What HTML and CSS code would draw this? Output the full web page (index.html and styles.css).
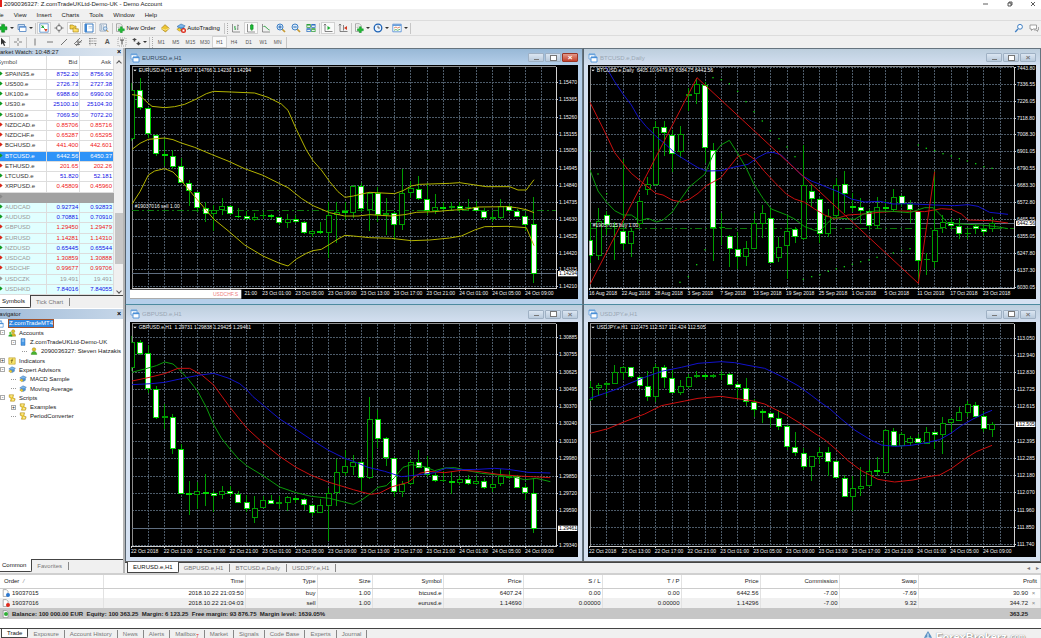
FILE: index.html
```html
<!DOCTYPE html>
<html lang="en">
<head>
<meta charset="utf-8">
<title>2090036327: Z.comTradeUKLtd-Demo-UK - Demo Account</title>
<link rel="stylesheet" href="styles.css">
</head>
<body>
<svg class="defs" aria-hidden="true">
  <symbol id="i-plus" viewBox="0 0 10 10"><path d="M1 1h5v3H1z" fill="#fff" stroke="#999" stroke-width=".6"/><path d="M3.6 1.6h3v2.2h2.4v3H6.600v2.400h-3V6.800H1.200v-3h2.400z" fill="#12b32a" stroke="#067a18" stroke-width=".5"/></symbol>
  <symbol id="i-profiles" viewBox="0 0 10 10"><path d="M1 1.500h6.500v5H1z" fill="#cfe2f8" stroke="#5b86b8" stroke-width=".8"/><path d="M2.500 3.500H9v5H2.500z" fill="#fff" stroke="#4a7fc0" stroke-width=".8"/><path d="M2.500 4.200H9" stroke="#5a93d6"/></symbol>
  <symbol id="i-market" viewBox="0 0 10 10"><path d="M.8.8h8.400v8.400H.800z" fill="#fff" stroke="#4c88c8" stroke-width=".8"/><path d="M2 5l2-3 1 2.500z" fill="#14a52c"/><path d="M2.500 2.500l3 3" stroke="#14a52c"/><path d="M5 6h3.500L7 8.800z" fill="#d93a20"/></symbol>
  <symbol id="i-target" viewBox="0 0 10 10"><circle cx="5" cy="5" r="2.600" fill="#fff" stroke="#777" stroke-width=".9"/><path d="M5 .5v3M5 6.500v3M.5 5h3M6.500 5h3" stroke="#666" stroke-width=".9"/></symbol>
  <symbol id="i-folder" viewBox="0 0 10 10"><path d="M1 2h3l1 1h2v3H1z" fill="#f6d24a" stroke="#a07d10" stroke-width=".6"/><path d="M4 5h2l.8.8H9.300V9H4z" fill="#ffe067" stroke="#a07d10" stroke-width=".6"/></symbol>
  <symbol id="i-terminal" viewBox="0 0 10 10"><path d="M1 1h8v8H1z" fill="#fff" stroke="#3a7ac0"/><path d="M1 1h2v8H1z" fill="#3f86d2"/><path d="M4.500 3.500H8M4.500 5H8" stroke="#8ab2dd" stroke-width=".6"/></symbol>
  <symbol id="i-tester" viewBox="0 0 10 10"><path d="M1 1h6.500v7H1z" fill="#f5f8fb" stroke="#7d96b0" stroke-width=".8"/><path d="M2.500 2v5M4.200 2v5" stroke="#8ea5bc" stroke-width=".7"/><circle cx="6.200" cy="5.600" r="1.800" fill="#d5e9fb" stroke="#4c7fb5" stroke-width=".7"/><path d="M7.500 7l1.800 2" stroke="#c08a2c"/></symbol>
  <symbol id="i-order" viewBox="0 0 10 10"><path d="M1.500.8h4l1.500 1.600v6H1.500z" fill="#fff" stroke="#888" stroke-width=".7"/><path d="M2.500 3h3M2.500 4.500h2" stroke="#999" stroke-width=".6"/><path d="M5.300 3.800h2v2h2v2h-2v1.900h-2V7.800h-2v-2h2z" fill="#1fbd34" stroke="#0a7d1d" stroke-width=".4"/></symbol>
  <symbol id="i-editor" viewBox="0 0 10 10"><path d="M1 5.500l4-3.800 4.200 3.600L5.500 9z" fill="#edc531" stroke="#a57c12" stroke-width=".7"/><path d="M1 5.500L5.300 7 9.200 5.300" fill="none" stroke="#fff3a8" stroke-width=".7"/></symbol>
  <symbol id="i-advisor" viewBox="0 0 10 10"><path d="M1 3.600L5 1l4.200 1.900L5.600 5.300z" fill="#7db6ea" stroke="#2f6eae" stroke-width=".6"/><path d="M2.200 4.500v2.300l3 1.400L8 6.600V4" fill="#4d95d8" stroke="#2a66a5" stroke-width=".5"/><path d="M.8 6.300l2.600-1.300 2 1.700-2 1.600z" fill="#f5d02f" stroke="#a57c12" stroke-width=".4"/></symbol>
  <symbol id="i-stop" viewBox="0 0 4 4"><circle cx="2" cy="2" r="2" fill="#dc2a1a"/><path d="M1.200 1.200h1.600v1.600H1.200z" fill="#fff"/></symbol>
  <symbol id="i-bars" viewBox="0 0 10 10"><path d="M1.500 1v8H9M6.800 1.500v5.500M5.800 6h1M6.800 2.500h1" fill="none" stroke="#777" stroke-width=".8"/><path d="M4 3v4M3.200 4H4M4 6h1" stroke="#1b9a32" stroke-width=".8"/></symbol>
  <symbol id="i-candle" viewBox="0 0 10 10"><path d="M1.500 1v8H9" fill="none" stroke="#777" stroke-width=".8"/><path d="M5.800.8v7" stroke="#0b8a20" stroke-width=".8"/><path d="M4.500 2h2.600v4.300H4.500z" fill="#18bb34" stroke="#0b8a20" stroke-width=".6"/></symbol>
  <symbol id="i-line" viewBox="0 0 10 10"><path d="M1.500 1v8H9" fill="none" stroke="#777" stroke-width=".8"/><path d="M2.500 3.500C5 2.500 5.500 6 8.500 7" fill="none" stroke="#1b9a32"/></symbol>
  <symbol id="i-zoomin" viewBox="0 0 10 10"><path d="M6 6l3 3" stroke="#c79a33" stroke-width="1.700"/><circle cx="4" cy="4" r="3" fill="#d9ecfc" stroke="#3f7fc4"/><path d="M4 2.300v3.400M2.300 4h3.400" stroke="#2566b2"/></symbol>
  <symbol id="i-zoomout" viewBox="0 0 10 10"><path d="M6 6l3 3" stroke="#c79a33" stroke-width="1.700"/><circle cx="4" cy="4" r="3" fill="#d9ecfc" stroke="#3f7fc4"/><path d="M2.300 4h3.400" stroke="#2566b2"/></symbol>
  <symbol id="i-tile" viewBox="0 0 10 10"><path d="M.5 1h4.200v3.700H.500zM5.300 5.300h4.200V9H5.300z" fill="#2f9d3a"/><path d="M5.300 1h4.200v3.700H5.300zM.5 5.300h4.200V9H.500z" fill="#2f6fc4"/><path d="M1.200 2.500H4v1.500H1.200zM6 2.500h2.800V4H6zM1.200 6.800H4v1.500H1.200zM6 6.800h2.800v1.500H6z" fill="#e8f4ee"/></symbol>
  <symbol id="i-scroll" viewBox="0 0 10 10"><path d="M2 1v7.500h7.500M.8 2.300L2 1l1.200 1.300" fill="none" stroke="#666" stroke-width=".8"/><path d="M4.500 3v4L7.500 5z" fill="#19ad30"/></symbol>
  <symbol id="i-shift" viewBox="0 0 10 10"><path d="M2 1v7.500h7.500M.8 2.300L2 1l1.200 1.300M5.500 2v5.500" fill="none" stroke="#666" stroke-width=".8"/><path d="M9 3v4L6 5z" fill="#d33a22"/></symbol>
  <symbol id="i-clock" viewBox="0 0 10 10"><circle cx="5" cy="5" r="3.800" fill="#eaf4ff" stroke="#1d62b5" stroke-width="1.300"/><path d="M5 2.700V5h2" fill="none" stroke="#444" stroke-width=".8"/></symbol>
  <symbol id="i-template" viewBox="0 0 10 10"><path d="M.8 1.200h8.400v7.600H.800z" fill="#fff" stroke="#5a93d6" stroke-width=".9"/><path d="M.8 2.200h8.400" stroke="#5a93d6" stroke-width="1.400"/><path d="M2 5l2-1 1.500 1L8 4" fill="none" stroke="#d05a30" stroke-width=".7"/><path d="M2 7.300l2-.8 1.500.8 2.500-1" fill="none" stroke="#2c9b3c" stroke-width=".7"/></symbol>
  <symbol id="i-cursor" viewBox="0 0 10 10"><path d="M3 .8v7l1.700-1.600L6 9l1.200-.5-1.300-2.700h2.300z" fill="#333"/></symbol>
  <symbol id="i-cross" viewBox="0 0 10 10"><path d="M5 1v3M5 6v3M1 5h3M6 5h3" stroke="#777" stroke-width=".9"/></symbol>
  <symbol id="i-vline" viewBox="0 0 10 10"><path d="M5 1.500v7" stroke="#666" stroke-width=".9"/></symbol>
  <symbol id="i-hline" viewBox="0 0 10 10"><path d="M2 5h6" stroke="#666" stroke-width=".9"/></symbol>
  <symbol id="i-trend" viewBox="0 0 10 10"><path d="M2 8l6-6" stroke="#666" stroke-width=".9"/></symbol>
  <symbol id="i-channel" viewBox="0 0 10 10"><path d="M1 7l6-6M3 9l6-6M2 7.500h5M3.500 5h5M5 2.500v6" stroke="#666" stroke-width=".8"/></symbol>
  <symbol id="i-fibo" viewBox="0 0 10 10"><path d="M1 1.500h8M1 4h8M1 6.500h8M2 1v8M7.500 6v3" stroke="#777" stroke-width=".8" stroke-dasharray="1 .6"/></symbol>
  <symbol id="i-arrows" viewBox="0 0 10 10"><path d="M1 3l2.500-2L6 3 4.300 3v1.500H2.700V3zM5 6h1.700V4.800h1.600V6H10L7.500 8.500z" fill="#444"/></symbol>
  <symbol id="i-label" viewBox="0 0 10 10"><path d="M1 1h8v8H1z" fill="none" stroke="#888" stroke-width=".7" stroke-dasharray="1 1"/><path d="M3 3h4M5 3v4.500" stroke="#444"/></symbol>
  <symbol id="i-search" viewBox="0 0 10 10"><path d="M4 6L1.200 9" stroke="#3f7fc4" stroke-width="1.300"/><circle cx="6" cy="3.800" r="2.400" fill="#fff" stroke="#3f7fc4"/></symbol>
  <symbol id="i-chat" viewBox="0 0 10 10"><path d="M1 2h6.500v4H4L2.500 7.500V6H1z" fill="#fff" stroke="#888" stroke-width=".8"/><path d="M5 7h2l1.500 1.500V7H9.500V4" fill="none" stroke="#888" stroke-width=".7"/></symbol>
  <symbol id="i-chart" viewBox="0 0 10 10"><path d="M1 1h6v5H1z" fill="#fff" stroke="#6ba3dc" stroke-width=".9"/><path d="M1 1.500h6" stroke="#6ba3dc" stroke-width="1.400"/><path d="M3 4h6v5H3z" fill="#fff" stroke="#4a90d8" stroke-width=".9"/><path d="M3 4.500h6" stroke="#4a90d8" stroke-width="1.400"/></symbol>
  <symbol id="i-user" viewBox="0 0 10 10"><circle cx="5" cy="3" r="2.200" fill="#e2c22c" stroke="#8f7610" stroke-width=".5"/><path d="M1.500 9.300c0-5 7-5 7 0z" fill="#48b52e" stroke="#2b7c17" stroke-width=".5"/></symbol>
  <symbol id="i-users" viewBox="0 0 10 10"><circle cx="6.500" cy="2.800" r="2" fill="#e2c22c" stroke="#8f7610" stroke-width=".5"/><path d="M3.500 9c0-5 6-5 6 0z" fill="#d9b820" stroke="#8f7610" stroke-width=".5"/><circle cx="3" cy="5" r="1.500" fill="#6bcb3d"/><path d="M.5 9.500c0-4 5-4 5 0z" fill="#27a530"/></symbol>
  <symbol id="i-server" viewBox="0 0 10 10"><path d="M2.500.8h5v8.400h-5z" fill="#4a9be8" stroke="#1f62ad" stroke-width=".6"/><path d="M3.500 2.500h3M3.500 4h3" stroke="#dff0ff" stroke-width=".7"/></symbol>
  <symbol id="i-ind" viewBox="0 0 10 10"><path d="M1 1h8v8H1z" fill="#f9e56c" stroke="#b3951d" stroke-width=".7"/><path d="M6.500 2.500c-2-.5-1.500 1-2 5M3.300 4.500h3" fill="none" stroke="#6b5710" stroke-width=".8"/></symbol>
  <symbol id="i-script" viewBox="0 0 10 10"><path d="M1.500 1h5.500l-1 4 3 1-1 3H3l1-3.500L1.500 4z" fill="#f3d23c" stroke="#a07d10" stroke-width=".6"/><path d="M3 2.500h2.500M5 7.300h2.500" stroke="#fffbe0"/></symbol>
  <symbol id="i-doc" viewBox="0 0 10 10"><path d="M1.500.8h4l2 2v6.500h-6z" fill="#fff" stroke="#777" stroke-width=".7"/></symbol>
</svg>

<header class="titlebar">
  <span class="app-mark"></span>
  <h1>2090036327: Z.comTradeUKLtd-Demo-UK - Demo Account</h1>
  <svg class="win-ctl" viewBox="0 0 54 6" width="54" height="6"><path d="M1 3h5M26 2h3v3h-3zM27 2V1h3v3h-1M49 1l4 4M53 1l-4 4" fill="none" stroke="#333" stroke-width=".8"/></svg>
</header>
<nav class="menubar"><a href="#">File</a><a href="#">View</a><a href="#">Insert</a><a href="#">Charts</a><a href="#">Tools</a><a href="#">Window</a><a href="#">Help</a></nav>

<div class="toolbar main-tools">
  <button class="drop cut" aria-label="New chart"><svg><use href="#i-plus"/></svg><i></i></button>
  <button class="drop" aria-label="Profiles"><svg><use href="#i-profiles"/></svg><i></i></button>
  <span class="sep"></span>
  <button class="on" aria-label="Market Watch"><svg><use href="#i-market"/></svg></button>
  <button aria-label="Data Window"><svg><use href="#i-target"/></svg></button>
  <button class="on" aria-label="Navigator"><svg><use href="#i-folder"/></svg></button>
  <button class="on" aria-label="Terminal"><svg><use href="#i-terminal"/></svg></button>
  <button aria-label="Strategy Tester"><svg><use href="#i-tester"/></svg></button>
  <span class="sep"></span>
  <button class="wide"><svg><use href="#i-order"/></svg>New Order</button>
  <button aria-label="MetaEditor"><svg><use href="#i-editor"/></svg></button>
  <button class="wide auto"><svg><use href="#i-advisor"/><use href="#i-stop" x="5" y="5" width="5" height="5"/></svg>AutoTrading</button>
  <span class="sep grip"></span>
  <button aria-label="Bar chart"><svg><use href="#i-bars"/></svg></button>
  <button class="on" aria-label="Candlesticks"><svg><use href="#i-candle"/></svg></button>
  <button aria-label="Line chart"><svg><use href="#i-line"/></svg></button>
  <button aria-label="Zoom in"><svg><use href="#i-zoomin"/></svg></button>
  <button aria-label="Zoom out"><svg><use href="#i-zoomout"/></svg></button>
  <button aria-label="Tile windows"><svg><use href="#i-tile"/></svg></button>
  <span class="sep"></span>
  <button class="on" aria-label="Auto scroll"><svg><use href="#i-scroll"/></svg></button>
  <button aria-label="Chart shift"><svg><use href="#i-shift"/></svg></button>
  <span class="sep"></span>
  <button class="drop" aria-label="Indicators"><svg><use href="#i-order"/></svg><i></i></button>
  <button class="drop" aria-label="Periods"><svg><use href="#i-clock"/></svg><i></i></button>
  <button class="drop" aria-label="Templates"><svg><use href="#i-template"/></svg><i></i></button>
  <span class="sep"></span>
  <button class="push" aria-label="Search"><svg><use href="#i-search"/></svg></button>
  <button aria-label="Community"><svg><use href="#i-chat"/></svg></button>
</div>
<div class="toolbar line-tools">
  <button class="on first" aria-label="Cursor"><svg><use href="#i-cursor"/></svg></button>
  <button aria-label="Crosshair"><svg><use href="#i-cross"/></svg></button>
  <span class="sep"></span>
  <div class="group draw">
    <button aria-label="Vertical line"><svg><use href="#i-vline"/></svg></button>
    <button aria-label="Horizontal line"><svg><use href="#i-hline"/></svg></button>
    <button aria-label="Trendline"><svg><use href="#i-trend"/></svg></button>
    <button aria-label="Channel"><svg><use href="#i-channel"/></svg></button>
    <button aria-label="Fibonacci"><svg><use href="#i-fibo"/></svg></button>
    <button class="letter">A</button>
    <button aria-label="Text label"><svg><use href="#i-label"/></svg></button>
  </div>
  <button class="drop" aria-label="Arrows"><svg><use href="#i-arrows"/></svg><i></i></button>
  <span class="sep grip"></span>
  <div class="group periods">
    <button>M1</button><button>M5</button><button>M15</button><button>M30</button><button class="on">H1</button><button>H4</button><button>D1</button><button>W1</button><button>MN</button>
  </div>
  <span class="sep"></span>
</div>

<main class="workspace">
  <aside class="side">
    <section class="watch">
      <h2 class="pane-title"><span>Market Watch: 10:48:27</span><button aria-label="Close Market Watch">×</button></h2>
      <div class="watch-body">
        <table class="quotes">
          <thead><tr><th>Symbol</th><th>Bid</th><th>Ask</th></tr></thead>
          <tbody id="quotes"></tbody>
        </table>
        <div class="scroll"><i class="up"></i><b></b><i class="down"></i></div>
      </div>
      <div class="tabs"><button class="active">Symbols</button><button>Tick Chart</button></div>
    </section>
    <section class="navigator">
      <h2 class="pane-title blue"><span>Navigator</span><button aria-label="Close Navigator">×</button></h2>
      <ul class="tree">
        <li class="l0"><svg><use href="#i-chart"/></svg><span class="sel">Z.comTradeMT4</span></li>
        <li class="l1"><b>-</b><svg><use href="#i-users"/></svg>Accounts</li>
        <li class="l2"><b>-</b><svg><use href="#i-server"/></svg>Z.comTradeUKLtd-Demo-UK</li>
        <li class="l3"><b class="leaf"></b><svg><use href="#i-user"/></svg>2090036327: Steven Hatzakis</li>
        <li class="l1"><b>+</b><svg><use href="#i-ind"/></svg>Indicators</li>
        <li class="l1"><b>-</b><svg><use href="#i-advisor"/></svg>Expert Advisors</li>
        <li class="l2"><b class="leaf"></b><svg><use href="#i-advisor"/></svg>MACD Sample</li>
        <li class="l2"><b class="leaf"></b><svg><use href="#i-advisor"/></svg>Moving Average</li>
        <li class="l1"><b>-</b><svg><use href="#i-script"/></svg>Scripts</li>
        <li class="l2"><b>+</b><svg><use href="#i-script"/></svg>Examples</li>
        <li class="l2"><b class="leaf"></b><svg><use href="#i-script"/></svg>PeriodConverter</li>
      </ul>
      <div class="tabs low"><button class="active">Common</button><button>Favorites</button></div>
    </section>
  </aside>

  <div class="desk">
    <div class="charts">
      <article class="win active">
        <header><svg class="ico"><use href="#i-chart"/></svg><h3>EURUSD.e,H1</h3><button class="min" aria-label="Minimize"></button><button class="max" aria-label="Maximize"></button><button class="close" aria-label="Close">×</button></header>
        <svg class="plot" id="eurusd" viewBox="16 50 1344 702"></svg>
      </article>
      <article class="win">
        <header><svg class="ico"><use href="#i-chart"/></svg><h3>BTCUSD.e,Daily</h3><button class="min" aria-label="Minimize"></button><button class="max" aria-label="Maximize"></button><button class="close" aria-label="Close">×</button></header>
        <svg class="plot" id="btcusd" viewBox="10 50 1344 702"></svg>
      </article>
      <article class="win lower">
        <header><svg class="ico"><use href="#i-chart"/></svg><h3>GBPUSD.e,H1</h3><button class="min" aria-label="Minimize"></button><button class="max" aria-label="Maximize"></button><button class="close" aria-label="Close">×</button></header>
        <svg class="plot" id="gbpusd" viewBox="16 54 1344 705"></svg>
      </article>
      <article class="win lower">
        <header><svg class="ico"><use href="#i-chart"/></svg><h3>USDJPY.e,H1</h3><button class="min" aria-label="Minimize"></button><button class="max" aria-label="Maximize"></button><button class="close" aria-label="Close">×</button></header>
        <svg class="plot" id="usdjpy" viewBox="10 54 1344 705"></svg>
      </article>
    </div>
    <div class="tabs chart-tabs"><button class="active">EURUSD.e,H1</button><button>GBPUSD.e,H1</button><button>BTCUSD.e,Daily</button><button>USDJPY.e,H1</button><span class="arrows">◂<span>▸</span></span></div>
  </div>
</main>

<section class="terminal">
  <table class="orders">
    <colgroup><col class="c-order"><col class="c-time"><col class="c-type"><col class="c-size"><col class="c-sym"><col class="c-price"><col class="c-num"><col class="c-num"><col class="c-num"><col class="c-num"><col class="c-num"><col></colgroup>
    <thead><tr><th>Order &nbsp;<i>/</i></th><th>Time</th><th>Type</th><th>Size</th><th>Symbol</th><th>Price</th><th>S / L</th><th>T / P</th><th>Price</th><th>Commission</th><th>Swap</th><th>Profit</th></tr></thead>
    <tbody>
      <tr><td><svg><use href="#i-doc"/><circle cx="6" cy="6" r="2" fill="#2b78d0"/></svg>19037015</td><td>2018.10.22 21:03:50</td><td>buy</td><td>1.00</td><td>btcusd.e</td><td>6407.24</td><td>0.00</td><td>0.00</td><td>6442.56</td><td>-7.00</td><td>-7.69</td><td>30.90<s>×</s></td></tr>
      <tr class="alt"><td><svg><use href="#i-doc"/><circle cx="6" cy="6" r="2" fill="#e02a1c"/></svg>19037016</td><td>2018.10.22 21:04:03</td><td>sell</td><td>1.00</td><td>eurusd.e</td><td>1.14690</td><td>0.00000</td><td>0.00000</td><td>1.14296</td><td>-7.00</td><td>9.32</td><td>344.72<s>×</s></td></tr>
      <tr class="total"><td colspan="11"><svg><use href="#i-doc"/><circle cx="4" cy="4" r="2" fill="#2faf36"/></svg>Balance: 100 000.00 EUR&nbsp; Equity: 100 363.25&nbsp; Margin: 6 123.25&nbsp; Free margin: 93 876.75&nbsp; Margin level: 1639.05%</td><td>363.25<s></s></td></tr>
    </tbody>
  </table>
  <footer class="tabs term-tabs"><button class="active">Trade</button><button>Exposure</button><button>Account History</button><button>News</button><button>Alerts</button><button>Mailbox<sub>7</sub></button><button>Market</button><button>Signals</button><button>Code Base</button><button>Experts</button><button>Journal</button>
    <span class="mark"><svg viewBox="0 0 10 10"><path d="M5 0l2.500 4L10 10H0l2.500-6z" fill="#5e93c4"/><path d="M5 2v8M3 6h4" stroke="#dcebf8"/></svg>ForexBrokerz<small>.com</small></span>
  </footer>
</section>
<script src="charts.js"></script>
</body>
</html>
```
FILE: styles.css
```css
* { box-sizing: border-box; }
body {
  margin: 0;
  min-height: 100vh;
  display: flex;
  flex-direction: column;
  background: #f0f0f0;
  color: #222;
  font: 6px/8px "Liberation Sans", Arial, sans-serif;
  overflow: hidden;
}
.defs { position: absolute; width: 0; height: 0; }
h1, h2, h3, ul { margin: 0; padding: 0; font: inherit; list-style: none; }
button { font: inherit; color: inherit; border: 0; background: none; padding: 0; margin: 0; }
a { color: inherit; text-decoration: none; }

.titlebar { display: flex; align-items: center; height: 9px; padding-bottom: 2px; background: #fff; }
.app-mark { width: 2px; height: 7px; background: #e3221b; margin-right: 2px; }
.win-ctl { margin-left: auto; margin-right: 5px; }
.menubar { display: flex; align-items: center; gap: 10px; height: 11px; margin-left: -6px; }

.toolbar { display: flex; align-items: center; gap: 1px; border-top: 1px solid #dcdcdc; overflow: hidden; }
.main-tools { height: 15px; }
.line-tools { height: 13px; color: #555; }
.toolbar button { flex: none; width: 14px; height: 12px; display: flex; align-items: center; justify-content: center; }
.toolbar button.on { background: #fafafa; border: 1px solid #d2d2d2; }
.toolbar svg { flex: none; width: 10px; height: 10px; }
.toolbar .drop { width: 18px; gap: 2px; }
.toolbar .drop i { border: 2px solid transparent; border-top-color: #333; border-bottom: 0; }
.toolbar .cut { margin-left: -3px; }
.toolbar .first { margin-left: -4px; }
.toolbar .wide { width: 43px; gap: 1px; color: #111; }
.toolbar .auto { width: 50px; }
.toolbar .push { margin-left: auto; }
.sep { flex: none; width: 1px; height: 11px; background: #c6c6c6; }
.sep.grip { width: 4px; border-left: 1px solid #c6c6c6; border-right: 1px dotted #aaa; background: none; }
.group { display: grid; grid-auto-flow: column; grid-auto-columns: 1fr; }
.group button { width: auto; font-size: 5px; }
.group .letter { font-size: 7px; font-weight: bold; }
.draw { width: 101px; }
.periods { width: 131px; }

.workspace { display: flex; flex: 1; min-height: 525px; }
.side { width: 125px; flex: none; display: flex; flex-direction: column; border-right: 2px solid #b4b4b4; }
.pane-title { display: flex; justify-content: space-between; align-items: center; height: 8px; background: linear-gradient(90deg, #b9cde2, #dde6f0); overflow: hidden; }
.pane-title span { margin-left: -5px; }
.pane-title button { margin-right: 2px; font-size: 7px; font-weight: bold; color: #000; }
.pane-title.blue { height: 10px; margin-top: 1px; background: linear-gradient(90deg, #a3bdd9, #c5d6e8); }
.watch-body { display: flex; background: #fff; }
.quotes { flex: 1; height: 239px; border-collapse: collapse; line-height: 7px; table-layout: fixed; }
.quotes th { height: 13px; font-weight: normal; text-align: right; padding: 0 2px 0 0; border-bottom: 1px solid #ccc; border-right: 1px solid #ddd; color: #444; }
.quotes th:first-child { width: 46px; text-align: left; padding: 0; text-indent: -3px; }
.quotes td { padding: 0 1px 0 0; text-align: right; border: 1px solid #ddd; border-left: 0; color: #1111e6; white-space: nowrap; overflow: hidden; }
.quotes td:first-child { text-align: left; color: #333; padding: 0; }
.quotes td:first-child::before { content: ""; display: inline-block; width: 3px; height: 3px; margin: 0 3px 1px -1px; transform: rotate(45deg); background: #129a22; }
.quotes .down td:first-child::before { background: #d8281a; }
.quotes .down td + td { color: #f01414; }
.quotes .pale td { background: #e0ffff; }
.quotes .pale td:first-child { color: #999; }
.quotes .dim td + td { color: #999; }
.quotes .dim td:first-child::before { background: #999; }
.quotes .blank td { background: #a2a2a2; border-color: #a2a2a2; }
.quotes .blank td:first-child::before { background: #888; }
.quotes .picked td, .quotes .picked td:first-child, .quotes .picked td + td { background: #2f93f8; color: #fff; }
.scroll { width: 9px; display: flex; flex-direction: column; align-items: center; background: #f0f0f0; padding: 5px 0 2px; }
.scroll i { width: 4px; height: 4px; border: solid #555; border-width: 1px 0 0 1px; transform: rotate(45deg); }
.scroll .down { transform: rotate(225deg); }
.scroll b { width: 8px; height: 51px; margin: auto 0 25px; background: #c6c6c6; }

.tabs { display: flex; align-items: center; height: 14px; border-top: 1px solid #444; color: #777; background: #f0f0f0; }
.tabs button { flex: none; padding: 0 6px 0 5px; height: 8px; border-right: 1px solid #888; }
.tabs .active { align-self: stretch; height: auto; margin-top: -1px; background: #fff; border: 1px solid #444; border-top: 0; border-radius: 0 0 2px 0; color: #111; padding: 0 5px; }
.side .tabs .active { margin-left: -4px; }
.watch .tabs { height: 13px; }
.navigator { flex: 1; display: flex; flex-direction: column; background: #fff; }
.navigator .tabs { margin-top: auto; height: 14px; padding-bottom: 1px; }
.tree { display: grid; grid-auto-rows: 1fr; height: 102px; overflow: hidden; }
.tree li { display: flex; align-items: center; gap: 3px; white-space: nowrap; }
.tree svg { flex: none; width: 8px; height: 8px; }
.tree b { flex: none; width: 5px; height: 5px; border: 1px solid #aaa; font: 5px/3px "Liberation Sans", sans-serif; text-align: center; }
.tree .leaf { border: 0; border-top: 1px dotted #999; height: 1px; }
.tree .sel { background: #2f86e0; color: #fff; outline: 1px solid #a0522d; line-height: 7px; }
.l0 { padding-left: 0; margin-left: -4px; }
.l0 .sel { margin-left: 2px; }
.l1 { padding-left: 0; }
.l2 { padding-left: 11px; }
.l3 { padding-left: 22px; }

.desk { flex: 1; min-width: 0; display: flex; flex-direction: column; }
.charts { display: grid; grid-template-columns: 1fr 1fr; background: #8a8a8a; border-bottom: 1px solid #666; }
.win { min-width: 0; border: 1px solid #66747f; border-left-color: #56626c; border-bottom: 0; padding: 0 4px 5px; background: #d5e1f1; color: #9aa7b4; }
.win.active { background: #b5cfea; color: #33475c; }
.win header { display: flex; align-items: center; gap: 1px; height: 16px; background: linear-gradient(#bccedd, #d3dff0); margin: 0 -4px; padding: 1px 4px 0; }
.win.active header { background: linear-gradient(#98b8d6, #b5cfea); }
.win.lower header { height: 17px; }
.win.lower { padding-bottom: 4px; border-top-color: #4c8ba0; }
.win h3 { flex: 1; margin-left: 1px; }
.ico { width: 10px; height: 10px; }
.win header button { width: 16px; height: 9px; border: 1px solid #9fb1c4; border-radius: 1px; background: linear-gradient(#dbe6f2, #b9cadc); display: flex; align-items: center; justify-content: center; color: #777; font: bold 8px/7px "Liberation Sans", sans-serif; }
.win .min::before { content: ""; width: 5px; height: 1px; margin-top: 3px; background: #777; }
.win .max::before { content: ""; width: 5px; height: 4px; background: #fff; border: 1px solid #777; }
.win.active .close { background: linear-gradient(#e2998a, #c5402a); border-color: #9a3525; color: #fff; }
.plot { display: block; width: 100%; height: auto; background: #000; font: 15px "Liberation Sans", Arial, sans-serif; }
.plot text { fill: #f4f4f4; }
.grid { stroke: #4d5b69; stroke-width: 3; stroke-dasharray: 6 3; shape-rendering: crispEdges; }
.frame { fill: none; stroke: #8f8f8f; stroke-width: 3; shape-rendering: crispEdges; }
.axis { stroke: #d0d0d0; stroke-width: 3; shape-rendering: crispEdges; }
.now { stroke: #5f6e80; stroke-width: 3; shape-rendering: crispEdges; }
.level { stroke: #0b7a0b; stroke-width: 3; stroke-dasharray: 21 9 6 9; shape-rendering: crispEdges; }
.bull { fill: #000; stroke: #009c00; stroke-width: 3; shape-rendering: crispEdges; }
.bear { fill: #fff; stroke: #00d800; stroke-width: 3; shape-rendering: crispEdges; }
.curve { fill: none; stroke-width: 3; }
.yellow { stroke: #b3b300; }
.red { stroke: #cc0f0f; }
.blue-line { stroke: #1212cc; }
.green { stroke: #0a9c0a; }
.dot { fill: #10c810; }
.tag { fill: #fff; }
.plot .tag-text { fill: #000; }
.plot .ghost { fill: #f08080; }

.chart-tabs { height: 12px; margin-top: 0; flex: 1; background: #f0f0f0; padding-left: 2px; }
.chart-tabs .active { padding: 0 5px; }
.arrows { margin-left: auto; padding-right: 2px; display: flex; gap: 6px; color: #777; }

.terminal { flex: none; border-top: 2px solid #d0d0d0; background: #fff; display: flex; flex-direction: column; min-height: 65px; }
.orders { width: 100%; table-layout: fixed; border-collapse: collapse; }
.orders th { height: 13px; font-weight: normal; border-bottom: 1px solid #ccc; }
.orders td { height: 10px; }
.orders th, .orders td { padding: 0 1px 0 0; text-align: right; border-right: 1px solid #e2e2e2; line-height: 8px; white-space: nowrap; }
.orders th:first-child, .orders td:first-child { text-align: left; padding-left: 4px; }
.orders td:first-child { padding-left: 2px; }
.orders td svg { width: 8px; height: 8px; margin-right: 2px; vertical-align: top; }
.orders th i { color: #888; }
.orders th:last-child { padding-right: 3px; }
.orders s { display: inline-block; width: 11px; text-align: center; text-decoration: none; color: #888; }
.alt { background: #f0f0f0; }
.orders .total { background: #c6c6c6; font-weight: bold; }
.orders .total td { border-color: #c6c6c6; height: 11px; }
.c-order { width: 103px; }
.c-time { width: 142px; }
.c-type { width: 72px; }
.c-size { width: 55px; }
.c-sym { width: 71px; }
.c-price { width: 80px; }
.c-num { width: 79px; }
.term-tabs { height: 10px; margin-top: auto; overflow: hidden; }
.term-tabs .active { margin-left: 1px; }
.term-tabs button { padding: 0 5px; }
.term-tabs sub { color: #e02020; font-size: 5px; line-height: 5px; }
.mark { margin-left: auto; margin-right: 16px; align-self: flex-start; display: flex; align-items: center; gap: 2px; font: bold 11px/16px "Liberation Sans", sans-serif; color: #fff; text-shadow: 0 0 1px #777, 1px 1px 1px #999; }
.mark svg { width: 12px; height: 12px; }
.mark small { font-size: 7px; }
```
FILE: charts.js
```js
// Market Watch rows: symbol, bid, ask, state classes.
const quotes = [
  ['SPAIN35.e', '8752.20', '8756.90', ''], ['US500.e', '2726.73', '2727.38', ''],
  ['UK100.e', '6988.60', '6990.00', ''], ['US30.e', '25100.10', '25104.30', ''],
  ['US100.e', '7069.50', '7072.20', ''], ['NZDCAD.e', '0.85706', '0.85716', 'down'],
  ['NZDCHF.e', '0.65287', '0.65295', 'down'], ['BCHUSD.e', '441.400', '442.601', 'down'],
  ['BTCUSD.e', '6442.56', '6450.37', 'picked'], ['ETHUSD.e', '201.65', '202.26', 'down'],
  ['LTCUSD.e', '51.820', '52.181', ''], ['XRPUSD.e', '0.45809', '0.45960', 'down'],
  ['', '', '', 'blank'],
  ['AUDCAD', '0.92734', '0.92833', 'pale'], ['AUDUSD', '0.70881', '0.70910', 'pale'],
  ['GBPUSD', '1.29450', '1.29479', 'pale down'], ['EURUSD', '1.14281', '1.14310', 'pale down'],
  ['NZDUSD', '0.65445', '0.65544', 'pale'], ['USDCAD', '1.30859', '1.30888', 'pale down'],
  ['USDCHF', '0.99677', '0.99706', 'pale down'], ['USDCZK', '19.491', '19.491', 'pale dim'],
  ['USDHKD', '7.84016', '7.84055', 'pale']
];
document.getElementById('quotes').innerHTML = quotes
  .map(q => `<tr class="${q[3]}"><td>${q[0]}</td><td>${q[1]}</td><td>${q[2]}</td></tr>`).join('');

// Candles: "w|h high top bottom low", w = falling (filled), h = rising (hollow).
function drawChart(id, c) {
  let s = '';
  const top = c.top, bottom = c.bottom, left = c.left, right = c.right;
  for (let k = 0; k < 25; k++) {
    const x = c.gridX + 49.2 * k;
    s += `<line class="grid" x1="${x}" x2="${x}" y1="${top}" y2="${bottom}"/>`;
  }
  c.rows.forEach(([y, t]) => {
    s += `<line class="grid" x1="${left}" x2="${right}" y1="${y}" y2="${y}"/>`;
    if (t) s += `<line class="axis" x1="${right}" x2="${right + 5}" y1="${y}" y2="${y}"/><text x="${right + 8}" y="${Math.max(y + 5, 66)}">${t}</text>`;
  });
  s += `<path class="frame" d="M${left} ${bottom}V${top}H${right}"/>`;
  s += `<line class="now" x1="${left}" x2="${right}" y1="${c.price}" y2="${c.price}"/>`;
  if (c.level) s += `<line class="level" x1="${left}" x2="${right}" y1="${c.level}" y2="${c.level}"/>`;
  c.candles.split(',').forEach((row, i) => {
    const [kind, ...v] = row.trim().split(' ');
    const [hi, a, b, lo] = v.map(Number);
    const x = c.firstX + 24.6 * i;
    const cls = kind === 'w' ? 'bear' : 'bull';
    s += `<line class="bull" x1="${x}" x2="${x}" y1="${hi}" y2="${lo}"/>`;
    s += `<rect class="${cls}" x="${x - 7.5}" y="${a + 1}" width="15" height="${Math.max(b - a - 2, 1)}"/>`;
  });
  c.curves.forEach(([cls, pts]) => { s += `<polyline class="curve ${cls}" points="${pts}"/>`; });
  (c.dots || '').split(' ').filter(Boolean).forEach(p => {
    const [x, y] = p.split(',').map(Number);
    s += `<rect class="dot" x="${x - 2}" y="${y - 2}" width="4" height="4"/>`;
  });
  s += `<rect x="${left - 6}" y="${top}" width="4" height="${bottom - top}"/>`;
  s += `<path class="axis" fill="none" d="M${left} ${bottom}H${right}V${top}"/>`;
  c.times.forEach((t, i) => {
    if (!t) return;
    const x = c.timeX + 98.5 * i;
    const shift = t.length < 6 ? 45 : 0;
    s += `<line class="axis" x1="${x + 2}" x2="${x + 2}" y1="${bottom}" y2="${bottom + 5}"/><text x="${x + shift}" y="${bottom + 21}">${t}</text>`;
  });
  s += `<rect class="tag" x="${right + 5}" y="${c.price - 8}" width="58" height="16"/><text class="tag-text" x="${right + 8}" y="${c.price + 5}">${c.tag}</text>`;
  s += `<path class="tag" d="M${left + 4} ${top + 9}h10l-5 5z"/><text x="${left + 20}" y="${top + 17}">${c.title}</text>`;
  if (c.order) s += `<text x="${left + 8}" y="${c.orderY}">${c.order}</text>`;
  if (c.ghost) s += `<rect class="tag" x="16" y="724" width="334" height="27"/><text class="ghost" x="265" y="743">${c.ghost}</text>`;
  document.getElementById(id).innerHTML = s;
}

const hours = ['22 Oct 2018', '22 Oct 13:00', '22 Oct 17:00', '22 Oct 21:00', '23 Oct 01:00', '23 Oct 05:00', '23 Oct 09:00',
  '23 Oct 13:00', '23 Oct 17:00', '23 Oct 21:00', '24 Oct 01:00', '24 Oct 05:00', '24 Oct 09:00'];

drawChart('eurusd', {
  left: 22, right: 1295, top: 55, bottom: 720, gridX: 71, firstX: 21.5, timeX: 19, times: ['', '', '', '21:00', ...hours.slice(4)],
  price: 676, tag: '1.14294', level: 485, order: '#19037016 sell 1.00', orderY: 480, ghost: 'USDCHF.S',
  title: 'EURUSD.e,H1 &#160;1.14597 1.14766 1.14230 1.14294',
  rows: [[103, '1.15470'], [154, '1.15365'], [206, '1.15260'], [257, '1.15155'], [307, '1.15050'], [360, '1.14945'], [411, '1.14840'],
    [461, '1.14735'], [512, '1.14630'], [563, '1.14525'], [614, '1.14420'], [664, '1.14315'], [715, '1.14210']],
  candles: `h 105 125 270 278,w 88 124 178 186,w 175 178 257 268,w 256 259 316 322,w 270 317 322 352,w 305 322 355 362,w 330 354 403 405,
    w 395 404 428 472,w 430 430 478 490,w 462 480 496 520,h 470 485 497 548,h 448 473 485 500,w 470 474 497 500,w 478 502 506 508,w 488 504 512 515,
    h 493 505 514 517,h 490 500 503 512,w 498 500 505 512,w 505 505 524 530,h 497 511 523 538,w 500 511 520 525,w 518 520 554 558,h 545 548 556 565,
    w 520 549 554 556,h 460 500 553 628,h 460 490 499 585,w 460 489 494 515,h 411 412 494 510,w 403 412 481 492,h 430 433 484 548,w 415 433 499 520,
    h 450 493 499 560,w 490 493 530 575,h 363 433 530 545,h 398 420 433 448,w 383 421 450 455,w 405 451 488 500,h 438 475 488 497,w 462 475 482 487,
    h 462 473 478 487,w 460 472 480 490,h 453 475 478 487,w 458 475 486 488,w 478 487 508 512,h 490 507 509 520,h 453 472 508 512,w 467 473 486 490,
    w 482 487 504 507,w 493 504 528 548,w 447 528 675 705`,
  curves: [
    ['yellow', '22,139 46,142 71,165 82,174 120,178 150,175 180,168 215,152 245,136 267,129 320,131 390,134 430,147 470,167 490,186 515,243 545,305 565,337 590,365 615,400 640,430 661,447 686,443 711,437 735,432 810,436 835,427 860,413 885,408 975,405 1005,403 1045,409 1085,415 1155,415 1180,425 1205,425 1228,394'],
    ['yellow', '22,303 46,285 71,273 120,269 145,274 170,284 210,297 260,318 310,338 360,361 415,381 465,406 490,418 530,450 565,472 615,493 660,503 700,503 735,499 800,503 840,499 875,492 930,490 975,486 1020,483 1060,476 1150,475 1175,478 1205,484 1228,493'],
    ['yellow', '22,467 46,430 71,380 90,368 120,361 145,371 170,397 210,445 240,480 267,512 310,547 360,590 415,623 465,645 490,653 515,632 545,615 565,607 590,603 615,588 640,572 661,561 686,563 735,568 800,570 860,577 915,575 975,569 1010,563 1050,545 1080,535 1150,534 1205,538 1228,592']
  ]
});

drawChart('btcusd', {
  left: 16, right: 1289, top: 55, bottom: 720, gridX: 66, firstX: 17, timeX: 13,
  times: ['16 Aug 2018', '22 Aug 2018', '28 Aug 2018', '3 Sep 2018', '7 Sep 2018', '13 Sep 2018', '19 Sep 2018', '25 Sep 2018', '1 Oct 2018', '5 Oct 2018', '11 Oct 2018', '17 Oct 2018', '23 Oct 2018'],
  price: 525, tag: '6442.56', level: 541, order: '#19037015 buy 1.00', orderY: 536,
  title: 'BTCUSD.e,Daily &#160;6405.10 6479.87 6384.75 6442.56',
  rows: [[57, '7443.80'], [107, '7336.55'], [158, '7226.05'], [209, '7118.80'], [259, '7008.30'], [310, '6901.05'], [361, '6790.55'],
    [412, '6683.30'], [462, '6572.80'], [514, '6465.55'], [565, '6355.05'], [616, '6247.80'], [667, '6137.30'], [717, '6030.05']],
  candles: `w 520 575 622 645,h 480 517 622 635,w 487 500 529 560,h 520 532 534 635,w 333 549 587 605,h 538 547 586 627,h 445 458 527 535,h 385 408 425 440,
    h 217 236 409 412,w 218 235 254 322,w 245 260 316 372,h 233 256 311 328,h 120 137 141 188,h 90 106 135 168,w 100 109 298 345,w 285 305 538 638,
    h 495 536 539 590,w 560 562 602 655,w 552 602 626 663,h 577 599 626 652,h 495 524 600 603,h 470 493 526 568,w 480 508 642 645,h 565 596 628 640,
    h 500 547 592 693,w 537 542 566 583,h 290 409 571 574,w 407 427 451 475,w 448 451 555 583,h 482 502 555 565,h 388 409 502 512,w 368 406 436 495,
    w 435 472 478 490,w 450 476 488 527,w 482 487 532 545,h 447 476 532 543,w 455 477 481 488,h 423 445 484 490,w 440 443 466 475,w 455 466 484 523,
    w 487 489 636 700,h 615 632 634 680,h 368 545 640 660,h 500 520 538 553,w 508 521 532 542,w 508 532 555 573,h 540 554 556 573,w 530 532 541 557,
    w 530 541 549 563,h 507 524 541 552`,
  curves: [
    ['blue-line', '64,56 90,100 115,137 140,170 160,205 185,235 215,265 245,290 275,318 310,340 340,358 365,368 410,367 445,357 490,348 520,327 545,314 565,312 590,320 620,350 650,380 680,398 706,408 740,422 760,430 800,452 840,461 885,459 925,467 970,466 1050,470 1110,472 1150,469 1180,474 1215,492 1270,498'],
    ['red', '16,162 40,210 66,262 90,313 115,345 140,375 170,400 213,435 235,440 262,455 290,461 315,452 340,435 365,412 409,388 435,355 459,325 485,316 510,333 540,370 570,402 606,438 630,452 660,462 690,482 720,500 750,512 790,500 850,496 880,492 950,488 1020,490 1070,481 1100,483 1130,497 1150,515 1220,517 1270,524'],
    ['green', '16,365 40,428 66,462 90,487 115,500 140,500 165,517 190,510 215,521 235,515 262,492 290,450 315,415 360,378 385,320 409,290 434,276 459,315 485,360 508,408 535,450 560,482 606,500 630,512 660,535 690,546 706,548 725,528 745,508 810,513 835,498 870,488 920,489 975,493 1020,478 1045,478 1065,497 1090,525 1190,530 1235,535 1270,541'],
    ['red', '16,708 337,88 1001,705 1050,370']
  ],
  dots: '385,88 410,94 434,106 459,129 484,160 508,190 533,218 557,247 583,271 607,296 631,325 16,307 40,377 66,436 286,702 311,685 336,649 361,604 656,693 681,685 706,679 731,669 755,661 779,655 803,648 828,640 853,635 877,627 926,614 951,606 976,601 1001,290 1025,300 1050,307 1075,316 1100,323 1124,331 1148,338 1173,346 1198,355 1222,360'
});

drawChart('gbpusd', {
  left: 22, right: 1295, top: 59, bottom: 727, gridX: 71, firstX: 21.5, timeX: 19, times: hours,
  price: 673, tag: '1.29461', title: 'GBPUSD.e,H1 &#160;1.29731 1.29838 1.29425 1.29461',
  rows: [[99, '1.30885'], [151, '1.30755'], [204, '1.30625'], [256, '1.30495'], [307, '1.30370'], [359, '1.30240'], [411, '1.30110'],
    [464, '1.29980'], [516, '1.29850'], [568, '1.29720'], [620, '1.29590'], [672, ''], [723, '1.29340']],
  candles: `h 95 115 190 200,w 108 115 148 153,w 122 148 254 268,w 247 255 340 346,h 300 337 340 375,w 330 339 433 450,w 420 434 568 568,w 530 566 571 632,
    h 535 562 571 615,w 510 563 568 605,w 560 567 574 625,h 547 562 573 585,w 546 562 569 575,w 560 570 595 597,w 572 595 613 625,h 577 611 640 658,
    h 575 587 610 612,w 572 587 598 600,h 577 595 598 615,h 575 580 596 622,w 577 581 586 598,w 583 586 602 618,w 600 602 625 635,h 585 604 625 628,
    h 552 566 604 710,h 465 505 566 605,h 438 487 507 515,h 452 473 487 512,w 472 473 520 560,h 278 346 520 524,w 318 346 403 432,w 398 402 462 485,
    w 462 462 562 578,h 530 541 562 578,h 467 475 538 542,w 438 475 490 492,w 455 490 513 518,w 508 514 529 535,h 500 528 531 535,w 505 531 537 570,
    h 517 526 536 542,w 512 526 539 542,h 517 531 539 542,w 522 531 552 556,h 525 539 551 563,h 495 517 539 547,h 500 515 521 524,w 513 515 550 552,
    w 538 550 566 588,w 522 566 674 688`,
  curves: [
    ['green', '22,205 60,195 95,185 120,174 145,180 165,198 190,225 218,260 245,310 267,362 290,402 316,435 340,463 366,485 415,515 465,549 514,566 560,577 615,583 650,592 686,601 711,588 736,570 760,550 785,545 810,520 835,490 860,482 900,488 930,500 960,492 990,491 1030,500 1070,508 1120,513 1170,520 1200,527 1235,523 1277,533'],
    ['red', '22,231 70,221 120,209 160,193 195,193 230,212 267,243 316,310 366,372 415,417 465,457 514,490 560,514 610,534 650,546 686,557 715,565 740,571 765,567 800,549 850,535 885,508 910,502 960,506 1010,499 1060,502 1120,511 1180,516 1277,521'],
    ['blue-line', '22,242 80,239 120,235 170,224 220,214 267,208 310,222 345,239 366,257 385,278 415,303 465,345 514,376 560,407 610,438 660,463 686,472 730,490 780,502 830,518 870,514 930,506 965,492 1010,497 1060,496 1110,493 1150,496 1210,505 1277,507']
  ]
});

drawChart('usdjpy', {
  left: 16, right: 1289, top: 59, bottom: 727, gridX: 66, firstX: 17, timeX: 13, times: hours,
  price: 361, tag: '112.505', title: 'USDJPY.e,H1 &#160;112.475 112.517 112.424 112.505',
  rows: [[103, '113.050'], [155, '112.940'], [206, '112.830'], [257, '112.725'], [308, '112.615'], [360, ''], [412, '112.395'],
    [463, '112.285'], [514, '112.180'], [565, '112.070'], [618, '111.960'], [670, '111.850'], [721, '111.740']],
  candles: `h 230 250 286 292,h 236 243 250 275,h 235 237 243 275,h 184 205 238 240,h 185 190 205 228,w 188 190 219 223,w 213 220 246 252,w 202 247 279 290,
    h 180 188 277 293,w 184 189 222 252,w 198 222 266 268,h 227 247 266 272,h 210 220 247 253,h 202 213 217 223,w 208 214 219 227,h 210 213 218 223,
    h 200 210 212 227,w 208 211 241 243,w 235 241 250 285,w 222 252 292 305,w 285 293 318 338,w 315 320 326 357,w 325 326 341 368,w 317 341 367 377,
    w 362 367 428 438,w 385 428 446 455,w 432 447 487 497,h 457 457 487 530,h 428 443 457 480,w 430 443 472 515,w 467 472 521 523,w 512 521 577 580,
    h 515 552 577 622,h 488 546 553 577,h 467 500 546 548,w 460 498 504 515,h 375 379 505 508,w 372 380 424 426,h 385 391 424 428,h 395 403 417 425,
    w 390 403 416 418,h 370 385 418 420,w 382 384 391 435,h 338 358 392 450,h 342 346 357 385,h 310 325 349 352,h 292 301 327 340,w 293 302 337 340,
    w 320 337 373 383,h 355 361 376 400`,
  curves: [
    ['blue-line', '16,283 60,268 95,256 130,240 180,220 230,202 290,190 340,178 409,173 450,176 490,184 540,193 590,217 640,245 680,274 706,294 735,314 770,345 810,378 860,409 890,423 930,427 980,424 1030,415 1065,407 1100,387 1130,365 1165,345 1200,328 1222,319'],
    ['red', '16,388 70,374 120,353 180,330 230,305 250,301 300,291 340,283 409,277 450,283 500,290 540,300 606,333 650,360 690,388 720,407 755,437 790,470 830,500 880,526 930,534 985,528 1030,518 1065,513 1100,494 1140,465 1175,443 1222,424']
  ]
});
```
